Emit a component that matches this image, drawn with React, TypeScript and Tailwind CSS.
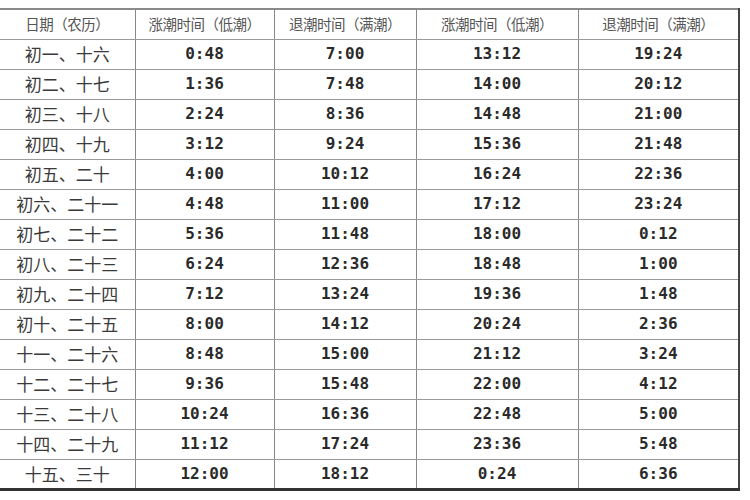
import React from "react";

const rows: string[][] = [
  ["初一、十六", "0:48", "7:00", "13:12", "19:24"],
  ["初二、十七", "1:36", "7:48", "14:00", "20:12"],
  ["初三、十八", "2:24", "8:36", "14:48", "21:00"],
  ["初四、十九", "3:12", "9:24", "15:36", "21:48"],
  ["初五、二十", "4:00", "10:12", "16:24", "22:36"],
  ["初六、二十一", "4:48", "11:00", "17:12", "23:24"],
  ["初七、二十二", "5:36", "11:48", "18:00", "0:12"],
  ["初八、二十三", "6:24", "12:36", "18:48", "1:00"],
  ["初九、二十四", "7:12", "13:24", "19:36", "1:48"],
  ["初十、二十五", "8:00", "14:12", "20:24", "2:36"],
  ["十一、二十六", "8:48", "15:00", "21:12", "3:24"],
  ["十二、二十七", "9:36", "15:48", "22:00", "4:12"],
  ["十三、二十八", "10:24", "16:36", "22:48", "5:00"],
  ["十四、二十九", "11:12", "17:24", "23:36", "5:48"],
  ["十五、三十", "12:00", "18:12", "0:24", "6:36"],
];

const headers = ["日期（农历）", "涨潮时间（低潮）", "退潮时间（满潮）", "涨潮时间（低潮）", "退潮时间（满潮）"];
const widths = ["w-[135px]", "w-[139px]", "w-[142px]", "w-[162px]", "w-[161px]"];

export default function App() {
  return (
    <div className="w-[750px] h-[500px] bg-white overflow-hidden pt-[8px]">
      <table className="border-collapse w-[739px] table-fixed border-t-2 border-t-[#8a8a8a] border-r-2 border-r-[#444] border-b-[3px] border-b-[#333]">
        <thead>
          <tr className="h-[30px]">
            {headers.map((h, i) => (
              <th
                key={i}
                className={`${widths[i]} p-0 font-normal text-[14.5px] text-[#555] text-center border-b border-b-[#999] ${i > 0 ? "border-l border-l-[#888]" : ""}`}
                style={{ fontFamily: '"Noto Sans CJK SC", "Noto Sans", sans-serif', letterSpacing: "-0.5px" }}
              >
                {h}
              </th>
            ))}
          </tr>
        </thead>
        <tbody>
          {rows.map((r, ri) => (
            <tr key={ri} className="h-[30px]">
              {r.map((c, ci) =>
                ci === 0 ? (
                  <td
                    key={ci}
                    className="p-0 text-center text-[17px] text-[#3a3a3a] border-b border-b-[#999]"
                    style={{ fontFamily: '"Noto Sans CJK SC", "Noto Sans", sans-serif' }}
                  >
                    {c}
                  </td>
                ) : (
                  <td
                    key={ci}
                    className="p-0 text-center text-[16px] font-bold text-[#2a2a2a] border-b border-b-[#999] border-l border-l-[#888]"
                    style={{ fontFamily: '"DejaVu Sans Mono", "Liberation Mono", monospace' }}
                  >
                    {c}
                  </td>
                )
              )}
            </tr>
          ))}
        </tbody>
      </table>
    </div>
  );
}
